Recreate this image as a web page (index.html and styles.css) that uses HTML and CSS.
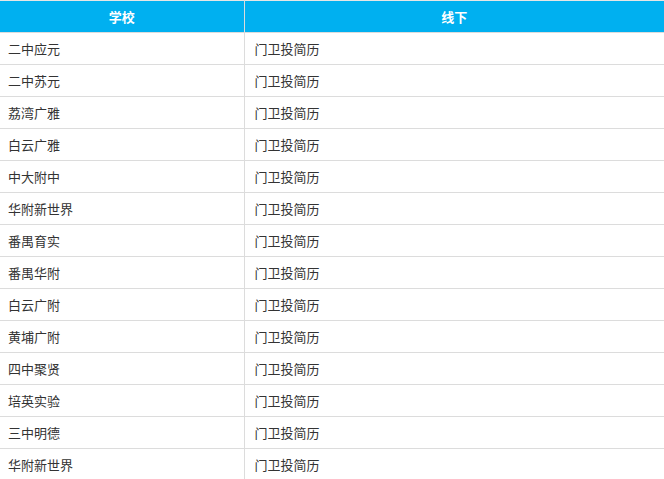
FILE: index.html
```html
<!DOCTYPE html>
<html lang="zh">
<head>
<meta charset="utf-8">
<link rel="stylesheet" href="styles.css">
</head>
<body>
<table class="grid">
  <colgroup><col class="c-school"><col class="c-mode"></colgroup>
  <thead>
    <tr><th>学校</th><th>线下</th></tr>
  </thead>
  <tbody>
    <tr><td>二中应元</td><td>门卫投简历</td></tr>
    <tr><td>二中苏元</td><td>门卫投简历</td></tr>
    <tr><td>荔湾广雅</td><td>门卫投简历</td></tr>
    <tr><td>白云广雅</td><td>门卫投简历</td></tr>
    <tr><td>中大附中</td><td>门卫投简历</td></tr>
    <tr><td>华附新世界</td><td>门卫投简历</td></tr>
    <tr><td>番禺育实</td><td>门卫投简历</td></tr>
    <tr><td>番禺华附</td><td>门卫投简历</td></tr>
    <tr><td>白云广附</td><td>门卫投简历</td></tr>
    <tr><td>黄埔广附</td><td>门卫投简历</td></tr>
    <tr><td>四中聚贤</td><td>门卫投简历</td></tr>
    <tr><td>培英实验</td><td>门卫投简历</td></tr>
    <tr><td>三中明德</td><td>门卫投简历</td></tr>
    <tr><td>华附新世界</td><td>门卫投简历</td></tr>
  </tbody>
</table>
</body>
</html>
```

FILE: styles.css
```css
html, body {
  margin: 0;
  padding: 0;
  background: #fff;
  overflow: hidden;
}
.grid {
  width: 665px;
  border-collapse: collapse;
  table-layout: fixed;
  font-family: "Microsoft YaHei", "Noto Sans CJK SC", "Noto Sans", sans-serif;
  font-size: 13px;
  color: #333;
}
.c-school { width: 244px; }
.grid th, .grid td {
  height: 31px;
  padding: 0;
  border: 1px solid #dcdcdc;
  line-height: 31px;
  white-space: nowrap;
}
.grid th {
  background: #00b0f0;
  color: #fff;
  font-weight: bold;
  text-align: center;
  border-top-color: #e6e6e6;
}
.grid td {
  text-align: left;
  padding-left: 10px;
}
.grid td:first-child {
  padding-left: 8px;
  border-left: none;
}
.grid th:first-child {
  border-left: none;
}
```
